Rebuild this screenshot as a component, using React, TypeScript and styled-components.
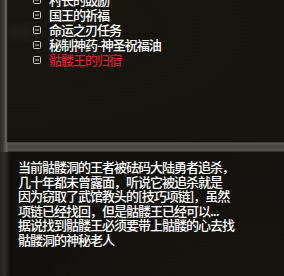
import React from 'react';
import styled, {createGlobalStyle} from 'styled-components';

const GlobalStyle = createGlobalStyle`
  html, body {
    margin: 0;
    padding: 0;
    background: #12110e;
  }
`;

const StyledFrame = styled.div`
  width: 284px;
  height: 276px;
  overflow: hidden;
  display: flex;
  flex-direction: column;
  background: #14130f;
  font-family: 'Noto Sans CJK SC', 'Liberation Sans', sans-serif;
  font-size: 13px;
  font-weight: 500;
  letter-spacing: -1px;
  color: #fff;
`;

const StyledTop = styled.div`
  height: 142px;
  display: flex;
  overflow: hidden;
`;

const StyledSideBar = styled.div`
  width: 8px;
  flex-shrink: 0;
  background: linear-gradient(90deg, #2c2b27 0, #3a3933 3px, #4b4a43 5px, #7d7b70 6px, #2a2924 7px, #1a1915 8px);
`;

const StyledList = styled.ul`
  list-style: none;
  margin: -8px 0 0;
  padding: 0 0 0 25px;
  flex: 1;
  background: radial-gradient(ellipse at 10px 40px, #201f1b 0, #16150f 30px, #15140f 100%);
`;

const StyledItem = styled.li<{active?: boolean}>`
  height: 15px;
  display: flex;
  align-items: center;
  gap: 8px;
  line-height: 15px;
  white-space: nowrap;
  color: ${props => props.active ? '#d2202c' : '#ffffff'};
`;

const StyledBar = styled.div`
  height: 10px;
  flex-shrink: 0;
  display: flex;
`;

const StyledBarEdge = styled.div`
  width: 8px;
  background: linear-gradient(90deg, #2c2b27 0, #3a3933 3px, #56544c 5px, #6e6c62 7px, #3e3d36 8px);
`;

const StyledBarBody = styled.div`
  flex: 1;
  background: linear-gradient(180deg, #201f1b 0, #5e5d55 1px, #4c4b44 3px, #45443e 6px, #5a5951 8px, #23221e 10px);
`;

const StyledPanel = styled.div`
  flex: 1;
  display: flex;
`;

const StyledPanelEdge = styled.div`
  width: 10px;
  flex-shrink: 0;
  background: linear-gradient(90deg, #22211d 0, #302f2a 4px, #1d1c18 8px, #161510 10px);
`;

const StyledPanelText = styled.div`
  padding: 8px 0 0 8px;
  flex: 1;
  background: radial-gradient(ellipse at 250px 270px, #2a2a25 0, #15140f 60px, #11100c 100%);
`;

const StyledLine = styled.div`
  height: 14.6px;
  line-height: 14.6px;
  white-space: nowrap;
`;

const BulletIcon: React.FC = () => (
  <svg width="8" height="8" viewBox="0 0 8 8" style={{flexShrink: 0}}>
    <rect x="0.5" y="0.5" width="7" height="7" rx="1" fill="none" stroke="#c8c8c0" strokeWidth="1"/>
    <line x1="2" y1="4" x2="6" y2="4" stroke="#c8c8c0" strokeWidth="1"/>
  </svg>
);

const quests = [
  {name: '村长的鼓励', active: false},
  {name: '国王的祈福', active: false},
  {name: '命运之刃任务', active: false},
  {name: '秘制神药-神圣祝福油', active: false},
  {name: '骷髅王的归宿', active: true},
];

const storyLines = [
  '当前骷髅洞的王者被砝码大陆勇者追杀，',
  '几十年都未曾露面，听说它被追杀就是',
  '因为窃取了武馆教头的[技巧项链]，虽然',
  '项链已经找回，但是骷髅王已经可以...',
  '据说找到骷髅王必须要带上骷髅的心去找',
  '骷髅洞的神秘老人',
];

const App: React.FC = () => {
  return (
    <StyledFrame>
      <GlobalStyle/>
      <StyledTop>
        <StyledSideBar/>
        <StyledList>
          {quests.map(q => (
            <StyledItem key={q.name} active={q.active}>
              <BulletIcon/>
              {q.name}
            </StyledItem>
          ))}
        </StyledList>
      </StyledTop>
      <StyledBar>
        <StyledBarEdge/>
        <StyledBarBody/>
      </StyledBar>
      <StyledPanel>
        <StyledPanelEdge/>
        <StyledPanelText>
          {storyLines.map(line => (
            <StyledLine key={line}>{line}</StyledLine>
          ))}
        </StyledPanelText>
      </StyledPanel>
    </StyledFrame>
  );
};

export default App;
